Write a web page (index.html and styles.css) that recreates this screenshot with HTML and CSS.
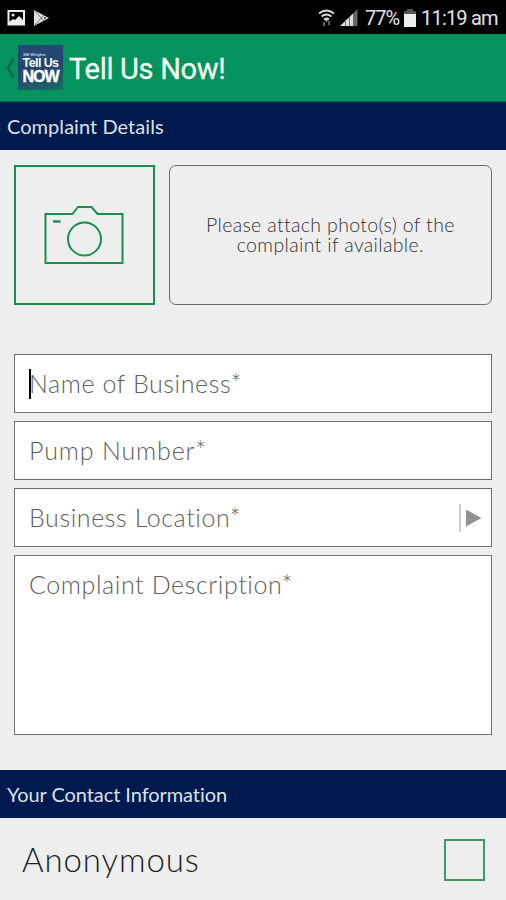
FILE: index.html
```html
<!DOCTYPE html>
<html lang="en">
<head>
<meta charset="utf-8">
<title>Tell Us Now!</title>
<link rel="stylesheet" href="styles.css">
</head>
<body>
<div class="status">
  <svg class="notes" width="44" height="18" viewBox="0 0 44 18">
    <rect x="1.500" y="2" width="15.500" height="13.500" fill="none" stroke="#eee" stroke-width="2"/>
    <circle cx="6" cy="6" r="1.500" fill="#eee"/>
    <path d="M2 13l4-3 2 1 4-4 5 5v4H2z" fill="#eee"/>
    <path d="M27 1l15 8-15 8z" fill="#ddd"/>
    <path d="M28 2l9 10M28 16l9-10" stroke="#777" stroke-width="1"/>
    <circle cx="38" cy="9" r="1" fill="#333"/>
  </svg>
  <svg class="wifi" width="18" height="18" viewBox="0 0 18 18" fill="none" stroke="#ddd" stroke-width="1.8">
    <path d="M1 4.500q7.500-6 15 0M3.500 7.500q5-4 10 0M6 10.500q2.500-2 5 0"/>
    <path d="M8.500 9.500v3" />
    <path d="M6 13v4M11 12v4" stroke="#666"/>
  </svg>
  <svg class="signal" width="18" height="18" viewBox="0 0 18 18">
    <path d="M0 17L13 4.500V17z" fill="#ddd"/><path d="M13 4.500L17.500 0V17H13z" fill="#666"/>
    <path d="M5.500 11v6M9.500 8v9" stroke="#777"/>
  </svg>
  <span class="percent">77%</span>
  <svg class="battery" width="12" height="18" viewBox="0 0 12 18"><path d="M0 2h3V0h6v2h3v4H0z" fill="#555"/><path d="M0 5h12v13H0z" fill="#eee"/></svg>
  <span class="time">11:19 am</span>
</div>
<header class="bar">
  <svg class="back" width="9" height="20" viewBox="0 0 9 20"><path d="M7.500 .5L2 10l5.500 9.500" fill="none" stroke="#04683f" stroke-width="2.400"/></svg>
  <div class="logo"><span class="logo-top">NB Weights</span><span class="logo-mid">Tell Us</span><span class="logo-low">NOW</span></div>
  <h1 class="title">Tell Us Now!</h1>
</header>
<h2 class="section">Complaint Details</h2>
<main class="form">
  <div class="photo-row">
    <div class="camera">
      <svg width="80" height="60" viewBox="0 0 80 60" fill="none" stroke="#16904c" stroke-width="2">
        <path d="M1.500 9H28.500l5.500-7H47.500l6 7h25v49H1.500z"/><circle cx="40.500" cy="34" r="16.500"/><path d="M9 16.500h7.500" stroke-width="2.500"/>
      </svg>
    </div>
    <div class="hint"><span>Please attach photo(s) of the<br>complaint if available.</span></div>
  </div>
  <div class="fields">
    <div class="field"><i class="caret"></i><span>Name of Business*</span></div>
    <div class="field"><span class="pump">Pump Number*</span></div>
    <div class="field"><span>Business Location*</span>
      <svg class="arrow" width="24" height="28" viewBox="0 0 24 28"><path d="M1 0v28" stroke="#bbb" stroke-width="1.500"/><path d="M7 5.500l15.500 8.500L7 22.500z" fill="#929292"/></svg>
    </div>
    <div class="field area"><span>Complaint Description*</span></div>
  </div>
</main>
<h2 class="section contact">Your Contact Information</h2>
<div class="anon"><span>Anonymous</span><i class="check"></i></div>
</body>
</html>
```

FILE: styles.css
```css
* { box-sizing: border-box; }
body {
  margin: 0;
  width: 506px;
  height: 900px;
  overflow: hidden;
  background: #eee;
  font-family: Lato, "Liberation Sans", sans-serif;
  font-variant-ligatures: none;
  white-space: nowrap;
}
.status {
  height: 34px;
  background: #000;
  color: #e4e4e4;
  display: flex;
  align-items: center;
  padding: 2px 8px 0 7px;
  font: 20px/32px Roboto, sans-serif;
}
.wifi { margin-left: auto; margin-right: 4px; }
.signal { margin-right: 7px; }
.percent { width: 35px; letter-spacing: -1px; }
.battery { margin: 0 5px 0 4px; }
.time { width: 77px; letter-spacing: -.8px; }
.bar {
  height: 68px;
  background: #04935c;
  display: flex;
  align-items: center;
  padding-left: 6px;
  border-bottom: 1px solid #04684f;
}
.back { margin-right: 3px; }
.logo {
  width: 45px;
  height: 45px;
  background: linear-gradient(165deg, #234a78 0%, #27436f 50%, #176b68 100%);
  color: #fff;
  display: flex;
  flex-direction: column;
  align-items: center;
  font-family: "Liberation Sans", sans-serif;
  font-weight: bold;
}
.logo-top { font-size: 4px; line-height: 5px; margin: 7px 12px 0 0; color: #c4d0dc; }
.logo-mid { font-size: 12.500px; line-height: 12px; letter-spacing: -.6px; }
.logo-low { font-size: 16px; line-height: 16px; letter-spacing: -1px; -webkit-text-stroke: .4px #fff; }
.title { margin: 2px 0 0 6px; color: #f6fbf5; font: 400 29px/40px Roboto, sans-serif; letter-spacing: -.3px; -webkit-text-stroke: .3px #f6fbf5; }
.section {
  margin: 0;
  height: 48px;
  background: #001a50;
  color: #dde0e6;
  font-size: 20px;
  font-weight: 400;
  line-height: 49px;
  padding-left: 7px;
  letter-spacing: .05px;
}
.contact { letter-spacing: -.07px; }
.form { padding: 15px 14px 0; height: 620px; }
.photo-row { display: flex; gap: 14px; height: 140px; }
.camera {
  width: 141px;
  border: 2px solid #16904c;
  display: flex;
  align-items: center;
  justify-content: center;
}
.hint {
  width: 324px;
  border: 1.500px solid #6c6c6c;
  border-radius: 7px;
  display: flex;
  align-items: center;
  justify-content: center;
  text-align: center;
  font-size: 19.500px;
  font-weight: 300;
  letter-spacing: .35px;
  line-height: 20px;
  color: #333;
}
.fields { display: flex; flex-direction: column; gap: 8px; margin-top: 49px; }
.field {
  position: relative;
  height: 59px;
  background: #fff;
  border: 1.500px solid #6e6e6e;
  padding: 0 8px 0 14px;
  display: flex;
  align-items: center;
  justify-content: space-between;
  font-size: 25px;
  font-weight: 300;
  letter-spacing: .6px;
  line-height: 57px;
  color: #606060;
}
.pump { letter-spacing: .85px; }
.area { height: 180px; align-items: flex-start; }
.caret { position: absolute; left: 14px; top: 14px; width: 2px; height: 30px; background: #000; }
.anon {
  height: 82px;
  display: flex;
  align-items: center;
  justify-content: space-between;
  padding: 2px 21px 0 22px;
  font-size: 33px;
  font-weight: 300;
  letter-spacing: .9px;
  color: #222;
}
.anon span { margin-top: -3px; }
.check { width: 41px; height: 42px; border: 2px solid #3c9c68; }
```
